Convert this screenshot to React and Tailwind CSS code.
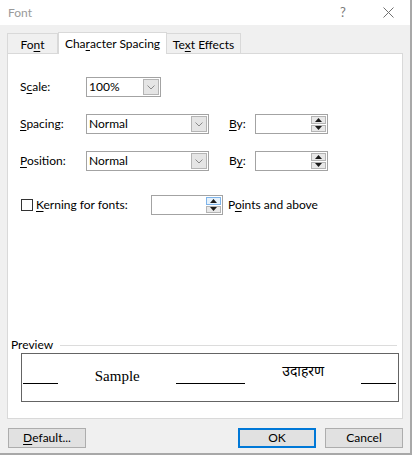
const ui = "font-['Lato',sans-serif]";

function Chevron() {
  return (
    <svg width="8" height="5" viewBox="0 0 8 5" fill="none">
      <path d="M0.5 0.5 L4 4 L7.5 0.5" stroke="#8a8a8a" strokeWidth="1" />
    </svg>
  );
}

function Dropdown({ value, width }) {
  return (
    <div className={`flex h-[20px] border border-[#a3a3a3] bg-white ${width}`}>
      <div className="flex-1 pl-[2px] leading-[18px]">{value}</div>
      <div className="m-px w-[16px] flex items-center justify-center bg-[#e5e5e5] border border-[#b4b4b4]">
        <Chevron />
      </div>
    </div>
  );
}

function Spin({ width, hover }) {
  return (
    <div className={`flex h-[20px] border border-[#a3a3a3] bg-white ${width}`}>
      <div className="flex-1" />
      <div className="w-[17px] flex flex-col p-px gap-px">
        <div
          className={`flex-1 flex items-center justify-center border ${
            hover ? "bg-[#e5f1fb] border-[#7eb4ea]" : "bg-[#e8e8e8] border-[#b4b4b4]"
          }`}
        >
          <svg width="7" height="4" viewBox="0 0 7 4">
            <path d="M3.5 0 L7 4 L0 4 Z" fill="#1a1a1a" />
          </svg>
        </div>
        <div className="flex-1 flex items-center justify-center bg-[#e8e8e8] border border-[#b4b4b4]">
          <svg width="7" height="4" viewBox="0 0 7 4">
            <path d="M0 0 L7 0 L3.5 4 Z" fill="#1a1a1a" />
          </svg>
        </div>
      </div>
    </div>
  );
}

function Key({ children }) {
  return <span className="underline underline-offset-2">{children}</span>;
}

export default function App() {
  return (
    <div className={`w-[413px] h-[458px] bg-white text-[12px] text-black ${ui}`}>
      <div className="w-[412px] h-[455px] bg-[#f0f0f0] border-r-2 border-b-2 border-[#a8a8a8] flex flex-col">
        {/* Title bar */}
        <div className="h-[25px] bg-white flex items-center pl-[8px] text-[#9a9a9a]">
          <span className="flex-1">Font</span>
          <span className="w-[12px] text-[13px] text-[#7a7a7a] mr-[31px]">?</span>
          <svg width="11" height="11" viewBox="0 0 11 11" className="mr-[16px]">
            <path d="M0.5 0.5 L10.5 10.5 M10.5 0.5 L0.5 10.5" stroke="#707070" strokeWidth="1" />
          </svg>
        </div>

        {/* Tabs */}
        <div className="flex items-end pl-[7px] mt-[6px] h-[22px]">
          <div className="w-[51px] h-[20px] border border-b-0 border-[#d9d9d9] flex items-center justify-center pt-[2px]">
            Fo<Key>n</Key>t
          </div>
          <div className="w-[109px] h-[22px] -mb-px bg-white border border-b-0 border-[#d9d9d9] flex items-center justify-center relative z-10">
            Cha<Key>r</Key>acter Spacing
          </div>
          <div className="w-[74px] h-[20px] border border-b-0 border-l-0 border-[#d9d9d9] flex items-center justify-center pt-[2px]">
            Te<Key>x</Key>t Effects
          </div>
        </div>

        {/* Panel */}
        <div className="ml-[7px] w-[396px] h-[366px] bg-white border border-[#d9d9d9] flex flex-col">
          <div className="flex items-center mt-[23px] pl-[12px]">
            <span className="w-[66px]">S<Key>c</Key>ale:</span>
            <Dropdown value="100%" width="w-[75px]" />
          </div>
          <div className="flex items-center mt-[17px] pl-[12px]">
            <span className="w-[66px]"><Key>S</Key>pacing:</span>
            <Dropdown value="Normal" width="w-[123px]" />
            <span className="w-[26px] ml-[20px]"><Key>B</Key>y:</span>
            <Spin width="w-[73px]" />
          </div>
          <div className="flex items-center mt-[17px] pl-[12px]">
            <span className="w-[66px]"><Key>P</Key>osition:</span>
            <Dropdown value="Normal" width="w-[123px]" />
            <span className="w-[26px] ml-[20px]">B<Key>y</Key>:</span>
            <Spin width="w-[73px]" />
          </div>
          <div className="flex items-center mt-[24px] pl-[13px]">
            <div className="w-[12px] h-[12px] border border-[#333] bg-white" />
            <span className="ml-[3px] w-[115px]"><Key>K</Key>erning for fonts:</span>
            <Spin width="w-[72px]" hover />
            <span className="ml-[5px]">P<Key>o</Key>ints and above</span>
          </div>

          <div className="flex-1" />

          {/* Preview */}
          <div className="flex items-center pl-[3px] pr-[5px] h-[12px]">
            <span>Preview</span>
            <div className="flex-1 ml-[7px] h-px bg-[#dcdcdc]" />
          </div>
          <div className="ml-[13px] mr-[3px] mt-[2px] mb-[16px] h-[49px] border border-[#646464] flex items-end justify-between pb-[17px] pl-px pr-[2px] font-['Liberation_Serif',serif] text-[15px] leading-none">
            <span className="w-[35px] border-b border-black" />
            <span>Sample</span>
            <span className="w-[69px] border-b border-black" />
            <span className="font-['Noto_Sans_Devanagari','Noto_Serif_Devanagari','Lohit_Devanagari','FreeSerif',serif] text-[14px] mb-[4px]">उदाहरण</span>
            <span className="w-[35px] border-b border-black" />
          </div>
        </div>

        {/* Buttons */}
        <div className="flex items-center mt-[9px] pl-[8px]">
          <button className="w-[78px] h-[20px] bg-[#e1e1e1] border border-[#adadad] flex items-center justify-center">
            <Key>D</Key>efault...
          </button>
          <div className="flex-1" />
          <button className="w-[78px] h-[20px] bg-[#e1e1e1] border-2 border-[#0078d7] flex items-center justify-center">
            OK
          </button>
          <button className="w-[78px] h-[20px] ml-[9px] mr-[7px] bg-[#e1e1e1] border border-[#adadad] flex items-center justify-center">
            Cancel
          </button>
        </div>
      </div>
    </div>
  );
}
